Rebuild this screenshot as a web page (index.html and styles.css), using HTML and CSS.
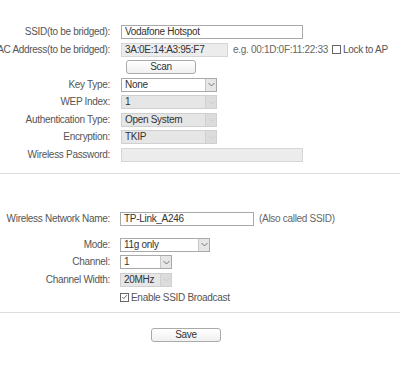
FILE: index.html
```html
<!DOCTYPE html>
<html lang="en">
<head>
    <meta charset="UTF-8">
    <title>Wireless Settings</title>
    <link rel="stylesheet" href="styles.css">
</head>
<body>
    <div class="section bridge">
        <div class="form-grid">
            <label>SSID(to be bridged):</label>
            <div class="field"><div class="text-box wide">Vodafone Hotspot</div></div>

            <label>MAC Address(to be bridged):</label>
            <div class="field">
                <div class="text-box mac disabled">3A:0E:14:A3:95:F7</div>
                <span class="hint">e.g. 00:1D:0F:11:22:33</span>
                <span class="check"></span>
                <span class="check-label">Lock to AP</span>
            </div>

            <span></span>
            <div class="field"><button class="btn scan">Scan</button></div>

            <label>Key Type:</label>
            <div class="field">
                <div class="select key">
                    <span class="value">None</span>
                    <span class="arrow"><svg width="7" height="5" viewBox="0 0 7 5"><path d="M0.5 1 L3.5 4 L6.5 1" fill="none" stroke="#777" stroke-width="1"/></svg></span>
                </div>
            </div>

            <label>WEP Index:</label>
            <div class="field">
                <div class="select key disabled">
                    <span class="value">1</span>
                    <span class="arrow"><svg width="7" height="5" viewBox="0 0 7 5"><path d="M0.5 1 L3.5 4 L6.5 1" fill="none" stroke="#ccc" stroke-width="1"/></svg></span>
                </div>
            </div>

            <label>Authentication Type:</label>
            <div class="field">
                <div class="select key disabled">
                    <span class="value">Open System</span>
                    <span class="arrow"><svg width="7" height="5" viewBox="0 0 7 5"><path d="M0.5 1 L3.5 4 L6.5 1" fill="none" stroke="#ccc" stroke-width="1"/></svg></span>
                </div>
            </div>

            <label>Encryption:</label>
            <div class="field">
                <div class="select key disabled">
                    <span class="value">TKIP</span>
                    <span class="arrow"><svg width="7" height="5" viewBox="0 0 7 5"><path d="M0.5 1 L3.5 4 L6.5 1" fill="none" stroke="#ccc" stroke-width="1"/></svg></span>
                </div>
            </div>

            <label>Wireless Password:</label>
            <div class="field"><div class="text-box wide disabled"></div></div>
        </div>
    </div>

    <div class="section network">
        <div class="form-grid">
            <label>Wireless Network Name:</label>
            <div class="field">
                <div class="text-box name">TP-Link_A246</div>
                <span class="hint">(Also called SSID)</span>
            </div>

            <label class="spaced">Mode:</label>
            <div class="field spaced">
                <div class="select mode">
                    <span class="value">11g only</span>
                    <span class="arrow"><svg width="7" height="5" viewBox="0 0 7 5"><path d="M0.5 1 L3.5 4 L6.5 1" fill="none" stroke="#777" stroke-width="1"/></svg></span>
                </div>
            </div>

            <label>Channel:</label>
            <div class="field">
                <div class="select small">
                    <span class="value">1</span>
                    <span class="arrow"><svg width="7" height="5" viewBox="0 0 7 5"><path d="M0.5 1 L3.5 4 L6.5 1" fill="none" stroke="#777" stroke-width="1"/></svg></span>
                </div>
            </div>

            <label>Channel Width:</label>
            <div class="field">
                <div class="select small disabled">
                    <span class="value">20MHz</span>
                    <span class="arrow"><svg width="7" height="5" viewBox="0 0 7 5"><path d="M0.5 1 L3.5 4 L6.5 1" fill="none" stroke="#ccc" stroke-width="1"/></svg></span>
                </div>
            </div>

            <span></span>
            <div class="field">
                <span class="check checked"><svg width="8" height="8" viewBox="0 0 8 8"><path d="M1.5 4 L3.2 5.8 L6.8 1.8" fill="none" stroke="#555" stroke-width="1"/></svg></span>
                <span class="check-label">Enable SSID Broadcast</span>
            </div>
        </div>
    </div>

    <div class="actions">
        <button class="btn save">Save</button>
    </div>
</body>
</html>
```

FILE: styles.css
```css
body {
    margin: 0;
    background: #fff;
    font-family: "Liberation Sans", Arial, sans-serif;
    font-size: 10px;
    letter-spacing: -0.3px;
    color: #555;
}

.section {
    border-bottom: 1px solid #ddd;
}

.bridge {
    padding: 25px 0 11px;
}

.network {
    padding: 38px 0 8px;
}

.form-grid {
    display: grid;
    grid-template-columns: 110px 1fr;
    column-gap: 11px;
    row-gap: 3.5px;
    align-items: center;
}

.network .form-grid {
    column-gap: 10px;
}

.form-grid label {
    display: flex;
    justify-content: flex-end;
    white-space: nowrap;
    line-height: 14px;
}

.form-grid label.spaced,
.field.spaced {
    margin-top: 8.5px;
}

.field {
    display: flex;
    align-items: center;
    height: 14px;
    white-space: nowrap;
}

.text-box {
    box-sizing: border-box;
    height: 14px;
    border: 1px solid #a9a9a9;
    padding: 0 3px;
    line-height: 12px;
    color: #333;
    background: #fff;
}

.text-box.disabled {
    background: #ececec;
    border-color: #d6d6d6;
}

.wide {
    width: 182px;
}

.mac {
    width: 107px;
}

.name {
    width: 134px;
}

.hint {
    margin-left: 5px;
    color: #666;
}

.check {
    box-sizing: border-box;
    display: inline-flex;
    align-items: center;
    justify-content: center;
    width: 9px;
    height: 9px;
    border: 1px solid #666;
    margin-left: 4px;
    background: #fff;
}

.check.checked {
    margin-left: 0;
}

.check-label {
    margin-left: 2px;
    color: #555;
}

.btn {
    box-sizing: border-box;
    height: 14px;
    width: 70px;
    padding: 0;
    border: 1px solid #aaa;
    border-radius: 3px;
    background: linear-gradient(#fff, #f0f0f0);
    font-family: "Liberation Sans", Arial, sans-serif;
    font-size: 10px;
    letter-spacing: -0.3px;
    line-height: 12px;
    color: #333;
}

.scan {
    margin-left: 5px;
}

.select {
    box-sizing: border-box;
    display: flex;
    height: 14px;
    border: 1px solid #a9a9a9;
    background: #fff;
    color: #333;
}

.select .value {
    flex: 1;
    padding-left: 3px;
    line-height: 12px;
}

.select .arrow {
    box-sizing: border-box;
    display: flex;
    align-items: center;
    justify-content: center;
    width: 11px;
    border-left: 1px solid #c8c8c8;
    background: #e6e6e6;
}

.select.disabled {
    background: #e6e6e6;
    border-color: #d0d0d0;
}

.select.disabled .arrow {
    background: #dcdcdc;
    border-left-color: #d0d0d0;
}

.key {
    width: 96px;
}

.mode {
    width: 90px;
}

.small {
    width: 52px;
}

.actions {
    padding-top: 15px;
    padding-left: 151px;
}
```
